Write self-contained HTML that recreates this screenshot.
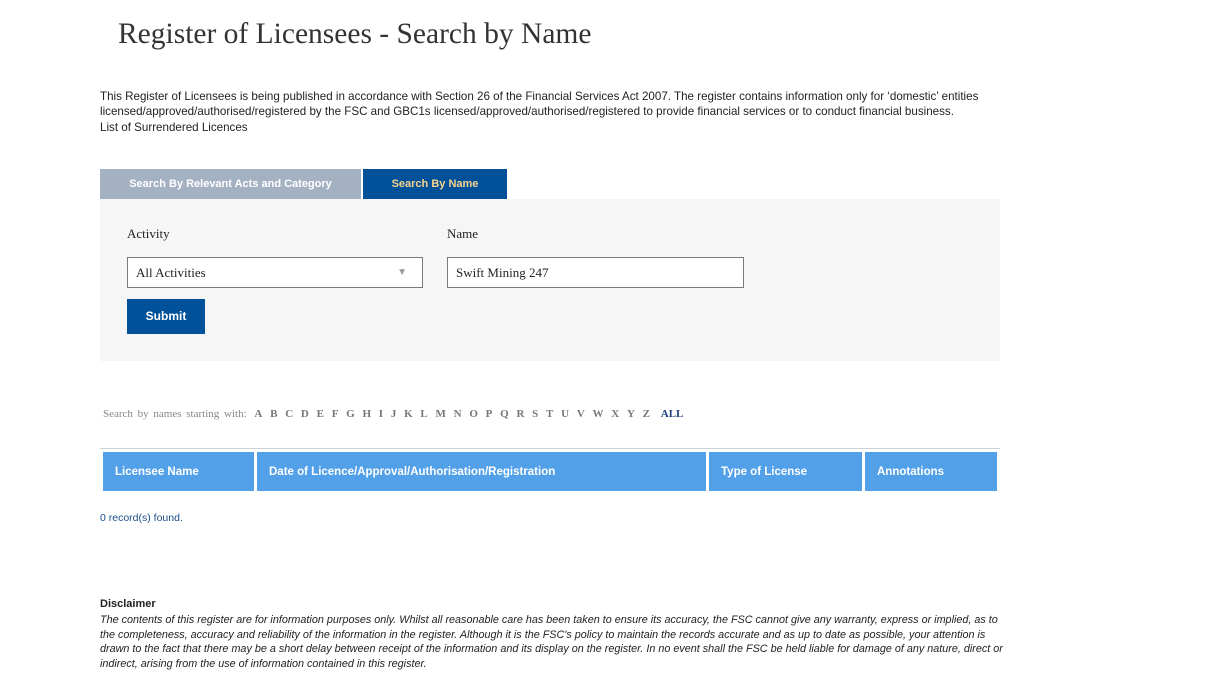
<!DOCTYPE html>
<html><head><meta charset="utf-8"><style>
body{margin:0;background:#fff;width:1221px;height:693px;overflow:hidden;font-family:"Liberation Sans",sans-serif;color:#222;position:relative}
.a{position:absolute}
h1{position:absolute;left:118px;top:18px;margin:0;font:400 29.5px "Liberation Serif",serif;color:#333}
.p{left:100px;top:89px;font-size:11.6px;line-height:15.3px;color:#222;width:910px}
.t1{left:100px;top:169px;width:261px;height:30px;background:#a3b1c2;color:#fff;font-weight:bold;font-size:11px;line-height:31px;text-align:center}
.t2{left:363px;top:169px;width:144px;height:30px;background:#00519a;color:#f7d38e;font-weight:bold;font-size:11px;line-height:31px;text-align:center}
.box{left:100px;top:199px;width:900px;height:162px;background:#f6f6f6}
.lab{font:13px "Liberation Serif",serif;color:#222}
.in{background:#fff;border:1px solid #7a7a7a;height:31px;box-sizing:border-box;font:13px "Liberation Serif",serif;line-height:29px;padding-left:8px}
.btn{left:127px;top:299px;width:78px;height:35px;background:#00519a;color:#fff;font-weight:bold;font-size:12px;line-height:35px;text-align:center}
.az{left:103px;top:408px;font:11px "Liberation Serif",serif;color:#888;word-spacing:2px}
.az b{color:#777;font-weight:bold;margin-left:3px}
.th{top:452px;height:39px;background:#52a0e8;color:#fff;font-weight:bold;font-size:11.5px;line-height:41px;padding-left:12px;box-sizing:border-box}
</style></head><body>
<h1>Register of Licensees - Search by Name</h1>
<div class="a p">This Register of Licensees is being published in accordance with Section 26 of the Financial Services Act 2007. The register contains information only for ‘domestic’ entities licensed/approved/authorised/registered by the FSC and GBC1s licensed/approved/authorised/registered to provide financial services or to conduct financial business.<br>List of Surrendered Licences</div>
<div class="a t1">Search By Relevant Acts and Category</div>
<div class="a t2">Search By Name</div>
<div class="a box"></div>
<div class="a lab" style="left:127px;top:226px">Activity</div>
<div class="a lab" style="left:447px;top:226px">Name</div>
<div class="a in" style="left:127px;top:257px;width:296px">All Activities<span style="position:absolute;right:15px;top:0;color:#999;font-size:10px">▼</span></div>
<div class="a in" style="left:447px;top:257px;width:297px">Swift Mining 247</div>
<div class="a btn">Submit</div>
<div class="a az">Search by names starting with: <b>A</b> <b>B</b> <b>C</b> <b>D</b> <b>E</b> <b>F</b> <b>G</b> <b>H</b> <b>I</b> <b>J</b> <b>K</b> <b>L</b> <b>M</b> <b>N</b> <b>O</b> <b>P</b> <b>Q</b> <b>R</b> <b>S</b> <b>T</b> <b>U</b> <b>V</b> <b>W</b> <b>X</b> <b>Y</b> <b>Z</b> <b style="color:#1a3f7a;margin-left:6px">ALL</b></div>
<div class="a" style="left:100px;top:448px;width:900px;height:1px;background:#c9d0d8"></div>
<div class="a th" style="left:103px;width:151px">Licensee Name</div>
<div class="a th" style="left:257px;width:449px">Date of Licence/Approval/Authorisation/Registration</div>
<div class="a th" style="left:709px;width:153px">Type of License</div>
<div class="a th" style="left:865px;width:132px">Annotations</div>
<div class="a" style="left:100px;top:512px;font-size:10.5px;color:#1a4f8a">0 record(s) found.</div>
<div class="a" style="left:100px;top:598px;font-size:11px;font-weight:bold;color:#222">Disclaimer</div>
<div class="a" style="left:100px;top:613px;width:905px;font-size:10.8px;line-height:14.6px;font-style:italic;color:#222">The contents of this register are for information purposes only. Whilst all reasonable care has been taken to ensure its accuracy, the FSC cannot give any warranty, express or implied, as to the completeness, accuracy and reliability of the information in the register. Although it is the FSC's policy to maintain the records accurate and as up to date as possible, your attention is drawn to the fact that there may be a short delay between receipt of the information and its display on the register. In no event shall the FSC be held liable for damage of any nature, direct or indirect, arising from the use of information contained in this register.</div>
</body></html>
